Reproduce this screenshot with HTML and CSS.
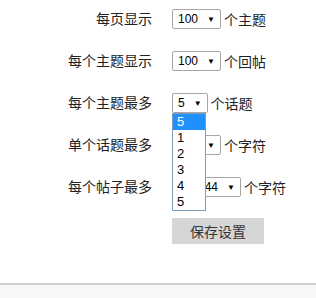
FILE: index.html
```html
<!DOCTYPE html>
<html lang="zh-cn">
<head>
<meta charset="UTF-8">
<meta name="viewport" content="width=device-width, initial-scale=1.0">
<title>论坛设置</title>
<link rel="stylesheet" href="styles.css">
</head>
<body>
<div id="settings">
    <form class="settings-form">
        <label class="field-label">每页显示</label>
        <div class="field">
            <span class="select">100<i class="arrow">▼</i></span>
            <span class="unit">个主题</span>
        </div>

        <label class="field-label">每个主题显示</label>
        <div class="field">
            <span class="select">100<i class="arrow">▼</i></span>
            <span class="unit">个回帖</span>
        </div>

        <label class="field-label">每个主题最多</label>
        <div class="field">
            <span class="select open">5<i class="arrow">▼</i>
                <ul class="options">
                    <li class="selected">5</li>
                    <li>1</li>
                    <li>2</li>
                    <li>3</li>
                    <li>4</li>
                    <li>5</li>
                </ul>
            </span>
            <span class="unit">个话题</span>
        </div>

        <label class="field-label">单个话题最多</label>
        <div class="field">
            <span class="select">100<i class="arrow">▼</i></span>
            <span class="unit">个字符</span>
        </div>

        <label class="field-label">每个帖子最多</label>
        <div class="field">
            <span class="select">102444<i class="arrow">▼</i></span>
            <span class="unit">个字符</span>
        </div>

        <span></span>
        <div class="field">
            <button type="submit" class="save-btn">保存设置</button>
        </div>
    </form>
</div>
<div id="footer"></div>
</body>
</html>
```

FILE: styles.css
```css
body {
    font-family: "Liberation Sans", "Noto Sans CJK SC", sans-serif;
    background-color: #fff;
    color: #222;
    margin: 0;
    padding: 0;
}
#settings {
    height: 283px;
    box-sizing: border-box;
    padding-top: 9px;
}
.settings-form {
    display: grid;
    grid-template-columns: 152px auto;
    column-gap: 20px;
    row-gap: 22px;
}
.field-label {
    text-align: right;
    font-size: 14px;
    line-height: 20px;
}
.field {
    display: flex;
    align-items: center;
    height: 20px;
}
.select {
    position: relative;
    display: inline-flex;
    align-items: center;
    height: 20px;
    box-sizing: border-box;
    padding: 0 5px 0 5px;
    border: 1px solid #a6a6a6;
    border-radius: 2px;
    font-size: 12px;
    color: #000;
    background-color: #fff;
}
.arrow {
    font-style: normal;
    font-size: 8px;
    margin-left: 9px;
}
.unit {
    font-size: 14px;
    margin-left: 3px;
}
.options {
    position: absolute;
    top: 19px;
    left: -1px;
    width: 32px;
    margin: 0;
    padding: 0;
    list-style: none;
    border: 1px solid #7f9db9;
    background-color: #fff;
    z-index: 2;
}
.options li {
    height: 16px;
    line-height: 16px;
    padding-left: 4px;
    font-size: 13px;
}
.options li.selected {
    background-color: #1e90ff;
    color: #fff;
}
.save-btn {
    width: 92px;
    height: 26px;
    margin-top: 4px;
    border: none;
    background-color: #d6d6d6;
    color: #333;
    font-family: inherit;
    font-size: 14px;
    cursor: pointer;
}
#footer {
    height: 15px;
    border-top: 2px solid #d2d2d2;
    background-color: #f7f7f7;
}
```
